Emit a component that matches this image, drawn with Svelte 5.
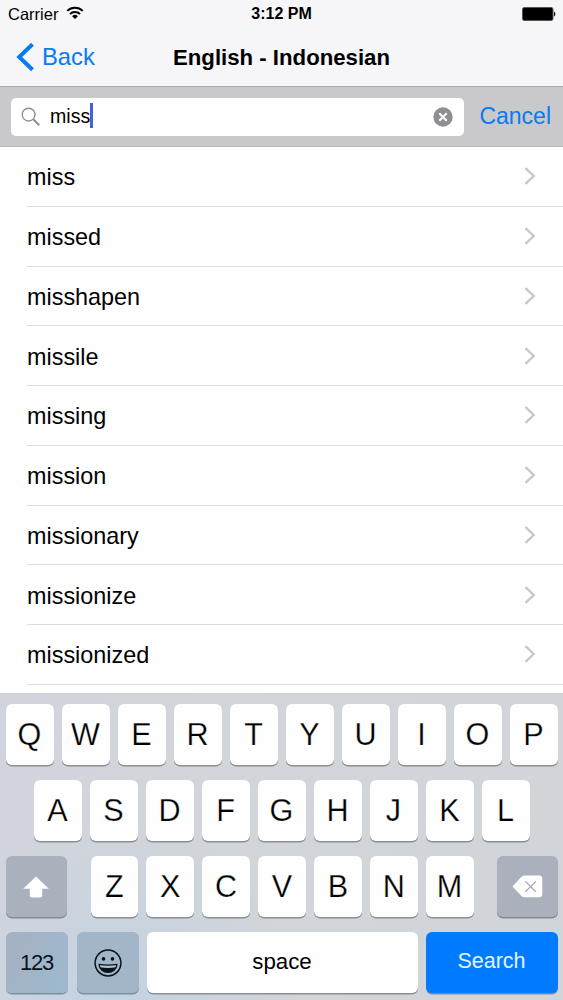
<script lang="ts">
	let query = $state('miss');

	const words = [
		'miss',
		'missed',
		'misshapen',
		'missile',
		'missing',
		'mission',
		'missionary',
		'missionize',
		'missionized'
	];

	const topKeys = 'QWERTYUIOP'.split('');
	const homeKeys = 'ASDFGHJKL'.split('');
	const bottomKeys = 'ZXCVBNM'.split('');
</script>

{#snippet letters(keys: string[])}
	<div class="letters">
		{#each keys as key}
			<button class="key letter">{key}</button>
		{/each}
	</div>
{/snippet}

<div class="screen">
	<header>
		<div class="status">
			<div class="carrier">
				<span>Carrier</span>
				<svg width="18" height="14" viewBox="0 0 18 14">
					<path d="M1.2 4.9a11.2 11.2 0 0 1 15.6 0M4 8a7.2 7.2 0 0 1 10 0" fill="none" stroke="#000" stroke-width="2" />
					<path d="M6.1 10.2a4.2 4.2 0 0 1 5.8 0L9 13.1z" />
				</svg>
			</div>
			<span class="time">3:12 PM</span>
			<svg class="battery" width="34" height="14" viewBox="0 0 34 14">
				<rect x=".5" y=".5" width="30.5" height="13" rx="1.8" fill="#000" stroke="#555" />
				<path d="M32 4.6c1.8.7 1.8 4.1 0 4.8z" />
			</svg>
		</div>
		<nav>
			<button class="back">
				<svg width="18" height="28" viewBox="0 0 18 28">
					<path d="M16.5 1.2 3.2 14l13.3 12.8" fill="none" stroke="#087bf3" stroke-width="4" />
				</svg>
				<span>Back</span>
			</button>
			<h1>English - Indonesian</h1>
		</nav>
	</header>

	<div class="search">
		<div class="field">
			<svg width="20" height="20" viewBox="0 0 20 20" fill="none" stroke="#8e8e93">
				<circle cx="7.6" cy="7.6" r="6.4" stroke-width="1.4" />
				<path d="m12.3 12.3 6 6" stroke-width="2" />
			</svg>
			<span class="query">{query}</span><span class="caret"></span>
			<button class="clear" aria-label="Clear" onclick={() => (query = '')}>
				<svg width="20" height="20" viewBox="0 0 20 20">
					<circle cx="10" cy="10" r="9.7" fill="#8e8e93" />
					<path d="m6.3 6.3 7.4 7.4m0-7.4-7.4 7.4" stroke="#fff" stroke-width="2.1" />
				</svg>
			</button>
		</div>
		<button class="cancel">Cancel</button>
	</div>

	<ul>
		{#each words as word}
			<li>
				<span>{word}</span>
				<svg width="12" height="18" viewBox="0 0 12 18">
					<path d="m1.5 1.2 8.2 7.8-8.2 7.8" fill="none" stroke="#c7c7cc" stroke-width="2.3" />
				</svg>
			</li>
		{/each}
	</ul>

	<div class="keyboard">
		<div class="row">{@render letters(topKeys)}</div>
		<div class="row home">{@render letters(homeKeys)}</div>
		<div class="row split">
			<button class="key key--gray" aria-label="Shift">
				<svg width="26" height="22" viewBox="0 0 26 22">
					<path d="M13 .4 25.8 12.8h-6.6v6.9q0 1.8-1.8 1.8H8.6q-1.8 0-1.8-1.8v-6.9H.2z" fill="#fff" />
				</svg>
			</button>
			{@render letters(bottomKeys)}
			<button class="key key--gray key--delete" aria-label="Delete">
				<svg width="31" height="23" viewBox="0 0 31 23">
					<path d="M.5 11.5 9.3 2Q10.7.5 12.5.5H27q3.3 0 3.3 3.3V19q0 3.3-3.3 3.3H12.5q-1.8 0-3.2-1.5z" fill="#fff" />
					<path d="m13.4 6.4 10.4 10.4m0-10.4L13.4 16.8" stroke="#a9a9a9" stroke-width="1.3" />
				</svg>
			</button>
		</div>
		<div class="row controls">
			<button class="key key--blue-gray numbers">123</button>
			<button class="key key--blue-gray emoji" aria-label="Emoji">
				<svg width="28" height="28" viewBox="0 0 28 28" fill="#08131d">
					<circle cx="14" cy="14" r="12.9" fill="none" stroke="#08131d" stroke-width="1.5" />
					<circle cx="9.5" cy="9.9" r="1.8" />
					<circle cx="18.5" cy="9.9" r="1.8" />
					<path d="M5 15.4c6 .9 12 .9 18 0-.5 4.900-4.300 8-9 8s-8.500-3.100-9-8z" fill="#b2c5d4" stroke="#08131d" stroke-width="1.200" stroke-linejoin="round" />
					<path d="M6.100 18.300c5.300 1 10.500 1 15.800 0-1.100 3.200-4.100 5.100-7.900 5.100s-6.800-1.900-7.900-5.100z" />
				</svg>
			</button>
			<button class="key space">space</button>
			<button class="key go">Search</button>
		</div>
	</div>
</div>

<style>
	:global(body) { background:#fff; }

	.screen {
		width:563px; height:1000px; overflow:hidden; display:flex; flex-direction:column;
		background:#fff; color:#000; font-family:"Liberation Sans", Arial, sans-serif;
	}
	button {
		font:inherit; color:inherit; border:0; padding:0; margin:0; background:none;
		display:flex; align-items:center; justify-content:center;
	}
	svg { display:block; flex-shrink:0; }

	header { height:86px; background:#f6f5f8; border-bottom:1px solid #acabae; flex-shrink:0; }
	.status {
		height:28px; padding:0 8px; display:grid; grid-template-columns:1fr auto 1fr; align-items:center;
		font-size:16.5px;
	}
	.carrier { display:flex; align-items:center; gap:8px; }
	.carrier svg { margin-top:-3px; }
	.time { font-size:16px; font-weight:700; }
	.battery { justify-self:end; margin-right:-1px; }

	nav { height:58px; display:grid; grid-template-columns:1fr auto 1fr; align-items:center; }
	.back { color:#087bf3; font-size:23.8px; gap:7px; padding-left:16px; justify-self:start; }
	.back span { padding-left:1px; }
	h1 { font-size:22.2px; line-height:28px; font-weight:700; margin:0; padding-top:1px; }

	.search {
		height:60px; box-sizing:border-box; padding:0 12px 0 11px; display:flex; align-items:center;
		justify-content:space-between; background:#c9c8cb; border-bottom:1px solid #b9b9bc; flex-shrink:0;
	}
	.field {
		width:453px; height:38px; box-sizing:border-box; padding:0 11px 0 10px; display:flex; align-items:center;
		background:#fff; border-radius:5px;
	}
	.query { font-size:19.6px; margin-left:9px; }
	.caret { width:2.5px; height:25px; background:#4262d6; margin-top:-2px; }
	.clear { margin-left:auto; }
	.cancel { color:#087bf3; font-size:23px; }

	ul { list-style:none; margin:0; padding:0; height:546px; overflow:hidden; flex-shrink:0; }
	li {
		height:59.75px; box-sizing:border-box; margin-left:27px; padding-right:27px; border-bottom:1px solid #dedee0;
		display:flex; align-items:center; justify-content:space-between; font-size:23.4px;
	}
	li span { padding-top:3px; }

	.keyboard {
		flex:1; box-sizing:border-box; padding:11px 5.5px 0; display:flex; flex-direction:column; gap:15px;
		background:
			radial-gradient(circle at 20% 100%, #c3d3e2 0, transparent 34%),
			linear-gradient(100deg, #d2d4dd 0, #d2d5d9 35%, #d1d5da 100%);
	}
	.row { height:61px; display:flex; }
	.letters { flex:1; display:flex; gap:8px; }
	.home { padding:0 28px; }
	.split .letters { padding:0 23px 0 24px; }

	.key {
		flex:1; height:61px; box-sizing:border-box; font-size:22px; background:#fefefe;
		border-radius:6px; box-shadow:0 1.5px 0 #8b8e93;
	}
	/* A stroke in the key's own colour thins the glyphs */
	.letter { font-size:30.6px; -webkit-text-stroke:.25px #fefefe; }
	.key--gray { flex:0 0 61px; background:#a9b1bc; box-shadow:0 1.5px 0 #858b94; }
	.key--delete { background:#abb1bc; }
	.key--blue-gray { background:#a2b6c8; box-shadow:0 1.5px 0 #7d909f; }
	.numbers {
		flex:0 0 62px; letter-spacing:-1.3px; margin-right:9px; color:#08131d;
		background:linear-gradient(110deg, #a6b1c0, #9db9cf);
	}
	.emoji { flex:0 0 62px; margin-right:8px; }
	.space { flex:0 0 271px; font-size:22.3px; margin-right:8px; padding-bottom:2px; }
	.go { font-size:21.5px; color:#e5f4ff; background:#007aff; padding-bottom:3px; box-shadow:0 1.5px 0 #6f8bb0; }
</style>
